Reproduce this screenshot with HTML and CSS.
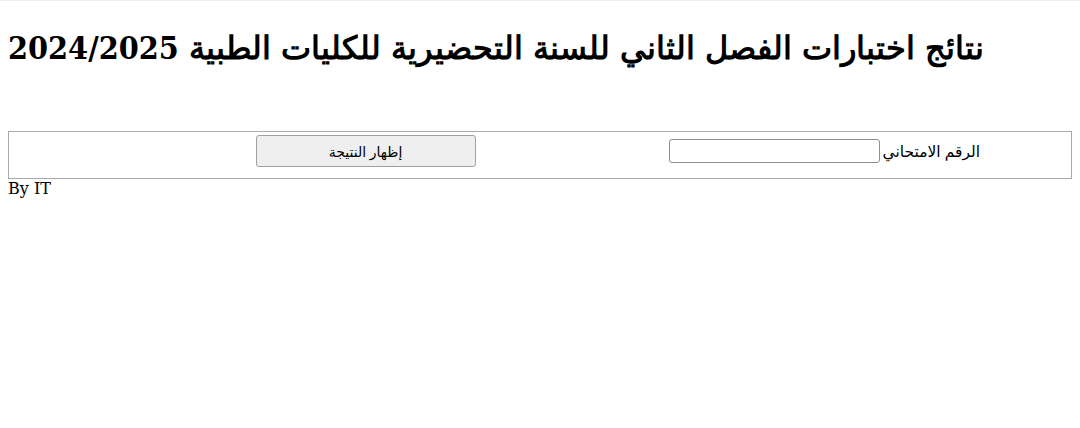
FILE: index.html
```html
<!DOCTYPE html>
<html lang="ar">
<head>
  <meta charset="UTF-8" />
  <meta name="viewport" content="width=device-width, initial-scale=1.0"/>
  <title>نتائج اختبارات الفصل الثاني</title>
  <link rel="stylesheet" href="styles.css">
</head>
<body>
  <h1 class="title">نتائج اختبارات الفصل الثاني للسنة التحضيرية للكليات الطبية 2024/2025</h1>

  <form class="result-form" dir="rtl" onsubmit="return false">
    <div class="field">
      <label for="examNo">الرقم الامتحاني</label>
      <input type="text" id="examNo" class="exam-input">
    </div>
    <button type="submit" class="show-btn">إظهار النتيجة</button>
  </form>

  <div class="footer-note">By IT</div>
</body>
</html>
```

FILE: styles.css
```css
html {
  border-top: 1px solid #eeeeee;
}

body {
  margin: 8px;
  font-family: 'DejaVu Serif', serif;
  font-size: 16px;
  color: #000;
  background: #fff;
}

.title {
  font-family: 'DejaVu Serif Condensed', 'DejaVu Serif', serif;
  font-size: 32px;
  font-weight: bold;
  margin: 21px 0 0;
  height: 101px;
  line-height: 36px;
}

.result-form {
  display: flex;
  align-items: center;
  border: 1px solid #a9a9a9;
  padding: 3px 91px 11px 0;
  gap: 193px;
}

.field {
  display: flex;
  align-items: center;
  gap: 3px;
}

.field label {
  font-family: 'Noto Sans', 'DejaVu Sans', sans-serif;
  font-size: 15.5px;
}

.exam-input {
  width: 211px;
  height: 24px;
  box-sizing: border-box;
  border: 1px solid #8f8f8f;
  border-radius: 3px;
  padding: 1px 2px;
}

.show-btn {
  width: 220px;
  height: 32px;
  background: #efefef;
  border: 1px solid #a0a0a0;
  border-radius: 3px;
  font-family: 'Noto Sans', 'DejaVu Sans', sans-serif;
  font-size: 14px;
  color: #000;
}

.footer-note {
  line-height: 19px;
}
```
